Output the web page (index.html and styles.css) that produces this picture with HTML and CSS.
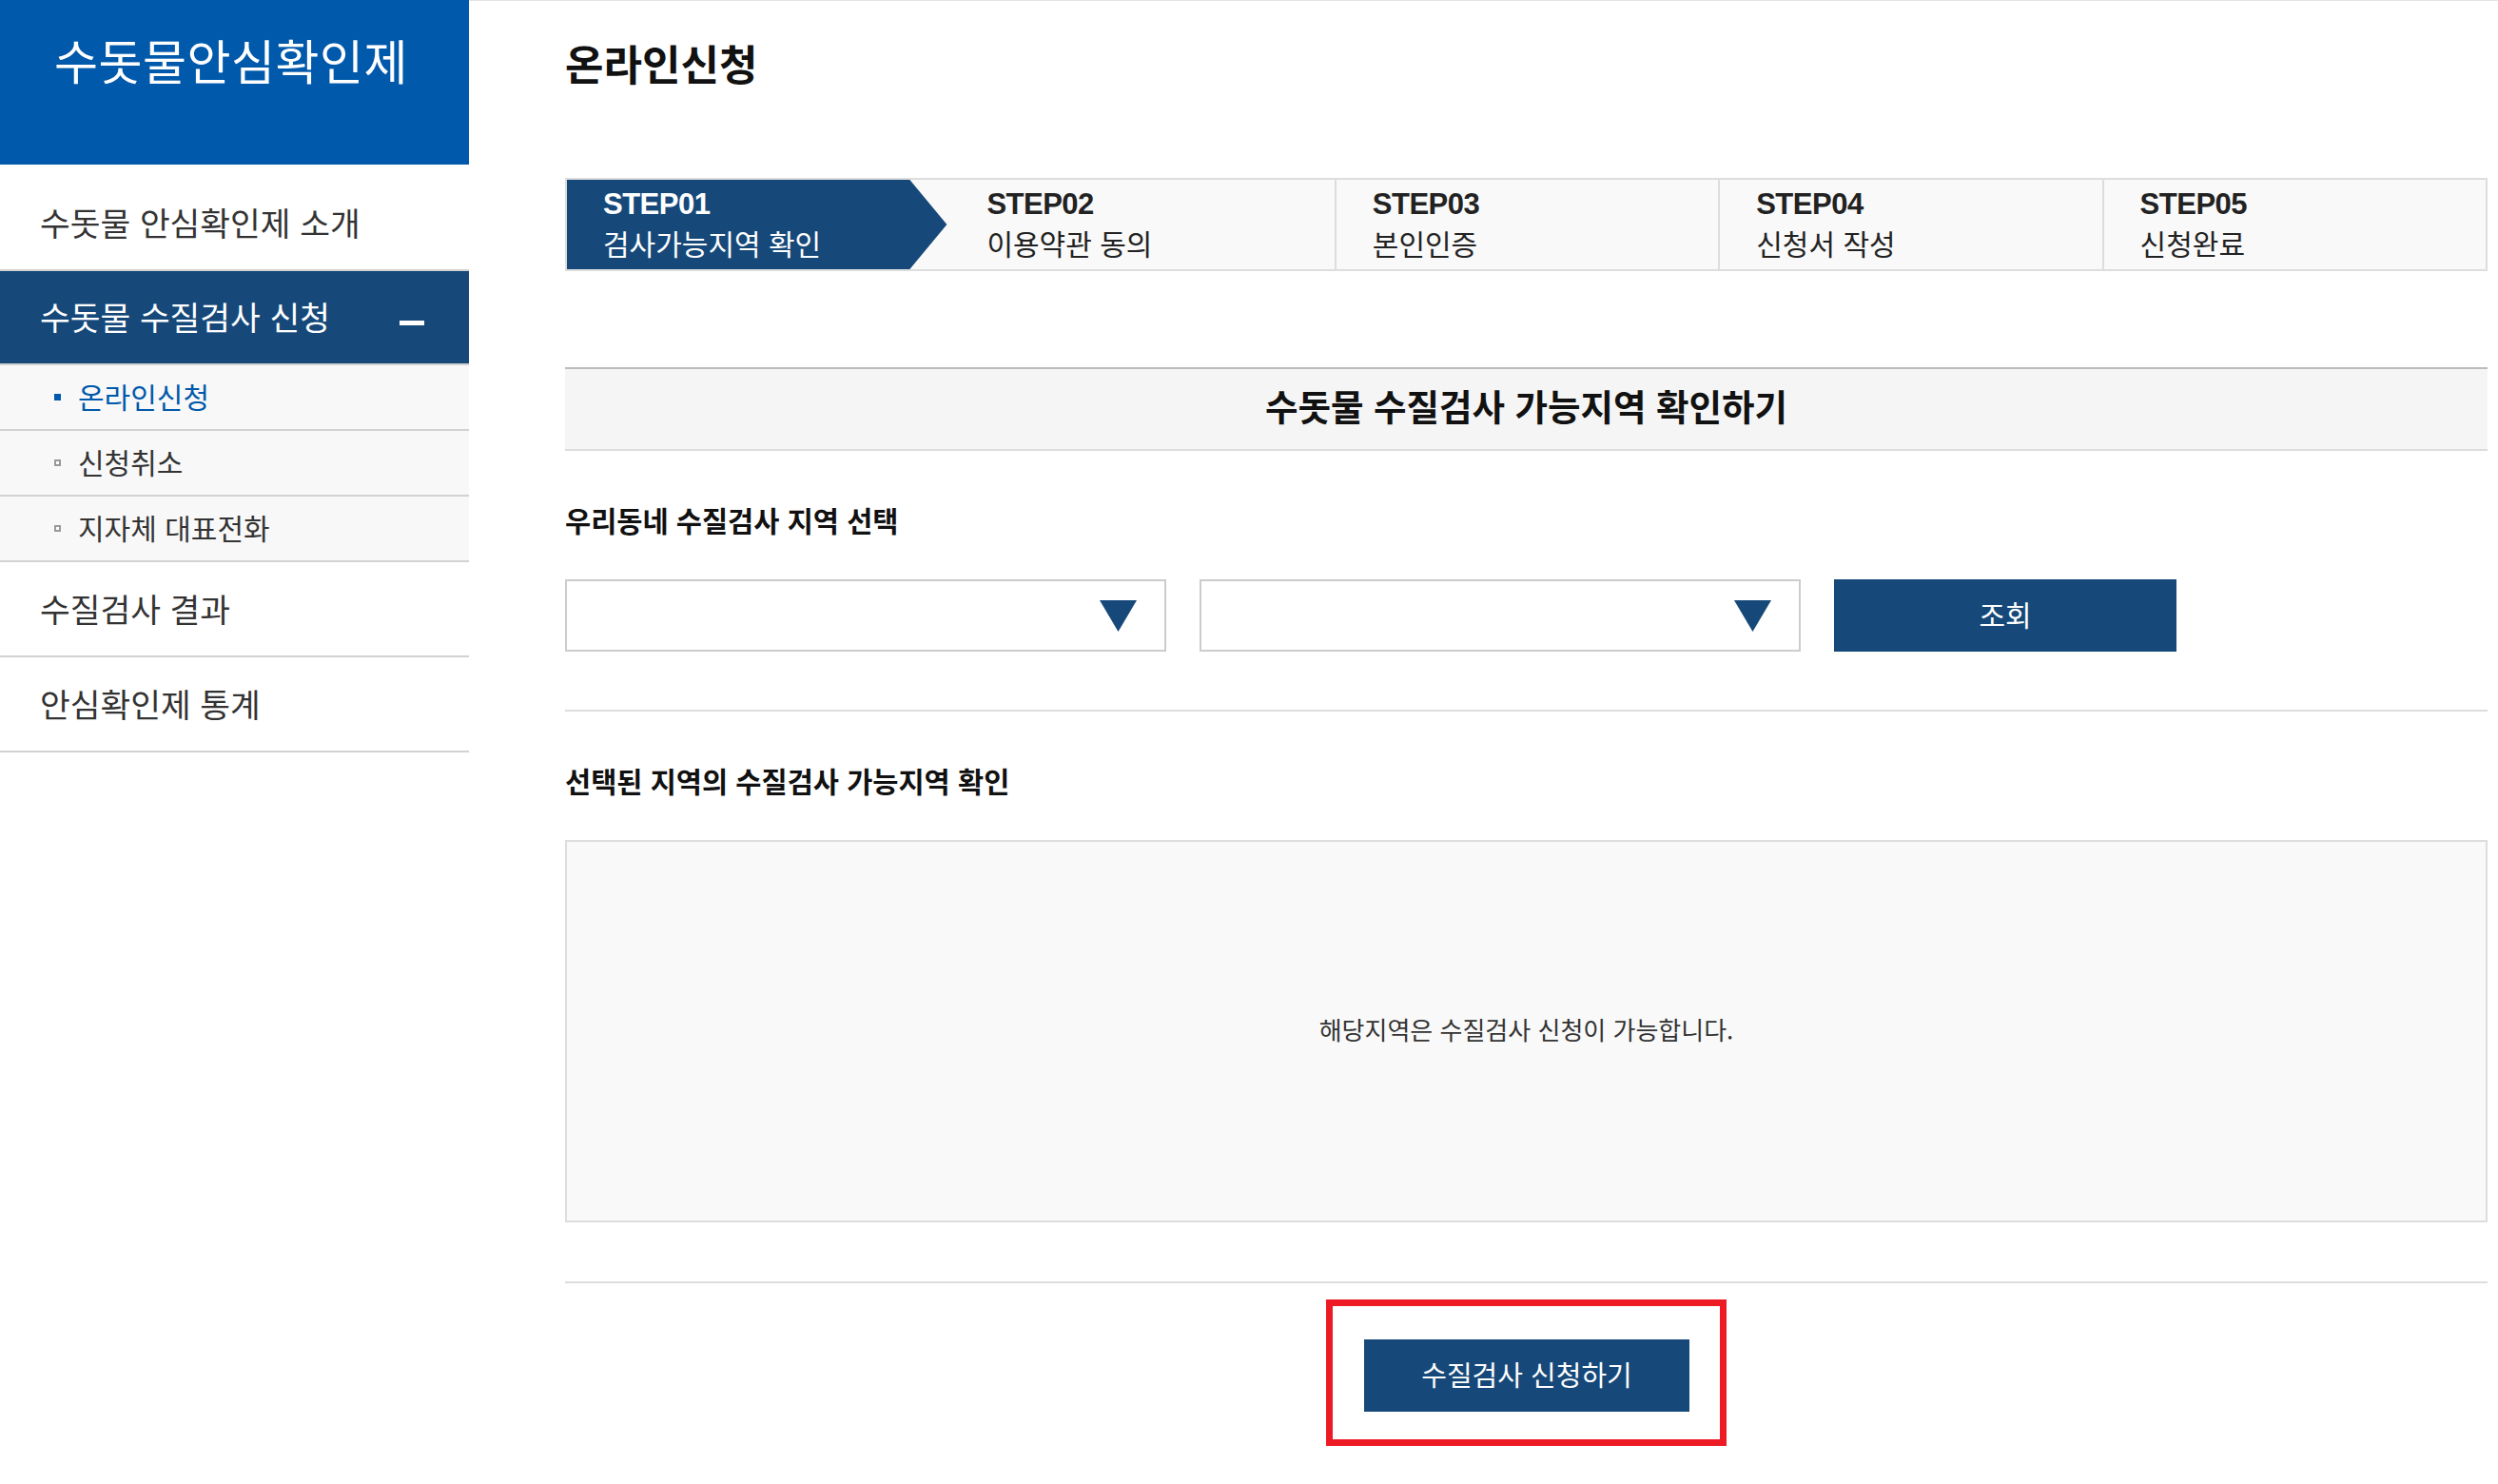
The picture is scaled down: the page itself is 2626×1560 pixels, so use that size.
FILE: index.html
```html
<!DOCTYPE html>
<html lang="ko">
<head>
  <meta charset="UTF-8">
  <meta name="viewport" content="width=device-width, initial-scale=1.0">
  <title>온라인신청 - 수돗물안심확인제</title>
  <link rel="stylesheet" href="styles.css">
</head>
<body>
  <div class="page">

    <!-- LEFT MENU -->
    <aside class="side">
      <div class="side-title">수돗물안심확인제</div>
      <ul class="menu">
        <li>
          <a class="menu-link">수돗물 안심확인제 소개</a>
        </li>
        <li>
          <a class="menu-link active">수돗물 수질검사 신청 <span class="minus"></span></a>
          <ul class="sub">
            <li class="on"><span class="dot"></span>온라인신청</li>
            <li><span class="dot"></span>신청취소</li>
            <li><span class="dot"></span>지자체 대표전화</li>
          </ul>
        </li>
        <li>
          <a class="menu-link">수질검사 결과</a>
        </li>
        <li>
          <a class="menu-link">안심확인제 통계</a>
        </li>
      </ul>
    </aside>

    <!-- CONTENT -->
    <main class="content">
      <h2 class="page-title">온라인신청</h2>

      <div class="steps">
        <div class="step active">
          <span class="step-num">STEP01</span>
          <span class="step-name">검사가능지역 확인</span>
        </div>
        <div class="step">
          <span class="step-num">STEP02</span>
          <span class="step-name">이용약관 동의</span>
        </div>
        <div class="step">
          <span class="step-num">STEP03</span>
          <span class="step-name">본인인증</span>
        </div>
        <div class="step">
          <span class="step-num">STEP04</span>
          <span class="step-name">신청서 작성</span>
        </div>
        <div class="step">
          <span class="step-num">STEP05</span>
          <span class="step-name">신청완료</span>
        </div>
      </div>

      <h3 class="check-title">수돗물 수질검사 가능지역 확인하기</h3>

      <div class="field-label">우리동네 수질검사 지역 선택</div>
      <div class="search-row">
        <div class="select">
          <svg class="arrow" width="39" height="33" viewBox="0 0 39 33"><polygon points="0,0 39,0 19.5,33" fill="#16497a"/></svg>
        </div>
        <div class="select">
          <svg class="arrow" width="39" height="33" viewBox="0 0 39 33"><polygon points="0,0 39,0 19.5,33" fill="#16497a"/></svg>
        </div>
        <button class="btn-search">조회</button>
      </div>

      <div class="section-line"></div>

      <div class="field-label">선택된 지역의 수질검사 가능지역 확인</div>
      <div class="result-box">해당지역은 수질검사 신청이 가능합니다.</div>

      <div class="section-line"></div>

      <div class="submit-area">
        <div class="mark">
          <button class="btn-apply">수질검사 신청하기</button>
        </div>
      </div>
    </main>
  </div>
</body>
</html>
```

FILE: styles.css
```css
body {
  margin: 0;
  font-family: "Noto Sans CJK KR", "Noto Sans", sans-serif;
  color: #333;
  background: #fff;
}

.page {
  display: flex;
  align-items: flex-start;
}

/* left menu */
.side {
  width: 493px;
  flex-shrink: 0;
}

.side-title {
  background-color: #0059ab;
  color: #fff;
  height: 173px;
  box-sizing: border-box;
  padding: 27px 0 0 57px;
  font-size: 50px;
  line-height: 70px;
  letter-spacing: 0.5px;
}

.menu {
  list-style: none;
  margin: 0;
  padding: 12px 0 0;
}

.menu-link {
  display: flex;
  align-items: center;
  justify-content: space-between;
  height: 100px;
  box-sizing: border-box;
  padding: 0 47px 3px 42px;
  border-bottom: 2px solid #d2d2d2;
  font-size: 34.5px;
  line-height: 40px;
  color: #333;
}

.menu-link.active {
  background-color: #16497a;
  color: #fff;
  height: 99px;
}

.minus {
  width: 26px;
  height: 5px;
  margin-top: 15px;
  background: #fff;
}

.sub {
  list-style: none;
  margin: 0;
  padding: 0;
  background: #f8f8f8;
}

.sub li {
  display: flex;
  align-items: center;
  gap: 18px;
  height: 69px;
  box-sizing: border-box;
  padding: 0 0 3px 57px;
  border-bottom: 2px solid #d2d2d2;
  font-size: 30px;
  color: #333;
}

.sub .dot {
  width: 3px;
  height: 3px;
  margin-top: 3px;
  border: 2px solid #999;
  background: #fff;
}

.sub li.on {
  color: #0059ab;
}

.sub li.on .dot {
  border-color: #0059ab;
  background: #0059ab;
}

/* content */
.content {
  flex: 1;
  min-width: 0;
  padding: 0 11px 30px 101px;
  border-top: 1px solid #e3e3e3;
}

.page-title {
  margin: 0;
  padding-top: 35px;
  font-size: 44px;
  line-height: 60px;
  font-weight: 700;
  color: #111;
}

.steps {
  display: grid;
  grid-template-columns: repeat(5, 1fr);
  height: 98px;
  box-sizing: border-box;
  margin-top: 91px;
  border: 2px solid #ddd;
  background: #f9f9f9;
}

.step {
  padding: 3px 0 0 38px;
  border-left: 2px solid #ddd;
  color: #222;
}

.step.active,
.step.active + .step {
  border-left: 0;
}

.step.active {
  background-color: #16497a;
  color: #fff;
  clip-path: polygon(0 0, calc(100% - 43px) 0, calc(100% - 4px) 50%, calc(100% - 43px) 100%, 0 100%);
}

.step-num {
  display: block;
  font-family: "Liberation Sans", Arial, sans-serif;
  font-weight: 700;
  font-size: 31px;
  line-height: 46px;
  letter-spacing: -0.5px;
}

.step-name {
  display: block;
  font-size: 30px;
  line-height: 34px;
}

.check-title {
  margin: 101px 0 0;
  padding: 12px 0 20px;
  border-top: 2px solid #bbb;
  border-bottom: 2px solid #ddd;
  background: #f5f5f5;
  text-align: center;
  font-size: 37.5px;
  line-height: 52px;
  font-weight: 700;
  color: #111;
}

.field-label {
  margin-top: 52px;
  padding-bottom: 3px;
  font-size: 29.5px;
  line-height: 40px;
  font-weight: 700;
  color: #111;
}

.search-row {
  display: flex;
  gap: 35px;
  margin-top: 40px;
}

.select {
  display: flex;
  align-items: center;
  justify-content: flex-end;
  width: 632px;
  height: 76px;
  box-sizing: border-box;
  padding-right: 29px;
  border: 2px solid #ccc;
  background: #fff;
}

.btn-search {
  width: 360px;
  height: 76px;
  padding: 0 0 5px;
  border: none;
  background-color: #16497a;
  color: #fff;
  font-family: inherit;
  font-size: 30px;
}

.section-line {
  margin-top: 61px;
  border-top: 2px solid #ddd;
}

.result-box {
  display: flex;
  align-items: center;
  justify-content: center;
  height: 402px;
  box-sizing: border-box;
  margin-top: 40px;
  padding-bottom: 5px;
  border: 2px solid #ddd;
  background: #f9f9f9;
  font-size: 26px;
  color: #333;
}

.result-box + .section-line {
  margin-top: 62px;
}

.submit-area {
  margin-top: 17px;
  text-align: center;
}

/* red highlight round the apply button */
.mark {
  display: inline-block;
  padding: 35px 32px 29px 33px;
  border: 7px solid #ed1c24;
}

.btn-apply {
  display: block;
  width: 342px;
  height: 76px;
  padding: 0 0 5px;
  border: none;
  background-color: #16497a;
  color: #fff;
  font-family: inherit;
  font-size: 29px;
}
```
